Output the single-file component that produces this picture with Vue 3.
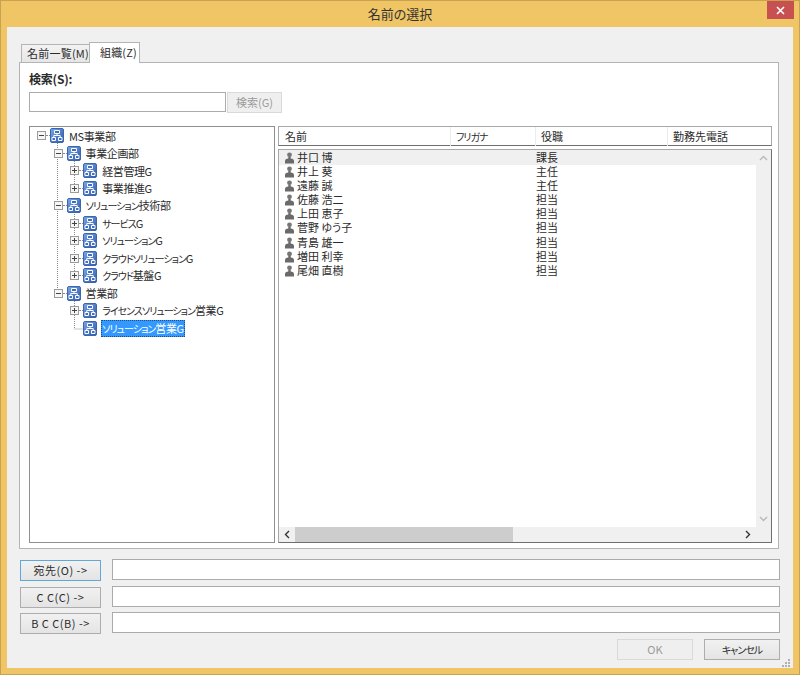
<script setup>
const tree = [
  { name: 'MS事業部', depth: 0, open: true },
  { name: '事業企画部', depth: 1, open: true },
  { name: '経営管理G', depth: 2 },
  { name: '事業推進G', depth: 2 },
  { name: 'ソリューション技術部', depth: 1, open: true },
  { name: 'サービスG', depth: 2 },
  { name: 'ソリューションG', depth: 2 },
  { name: 'クラウドソリューションG', depth: 2 },
  { name: 'クラウド基盤G', depth: 2 },
  { name: '営業部', depth: 1, open: true },
  { name: 'ライセンスソリューション営業G', depth: 2 },
  { name: 'ソリューション営業G', depth: 2, leaf: true, selected: true },
]

const people = [
  ['井口 博', '課長'],
  ['井上 葵', '主任'],
  ['遠藤 誠', '主任'],
  ['佐藤 浩二', '担当'],
  ['上田 恵子', '担当'],
  ['菅野 ゆう子', '担当'],
  ['青島 雄一', '担当'],
  ['増田 利幸', '担当'],
  ['尾畑 直樹', '担当'],
]

const columns = ['名前', 'フリガナ', '役職', '勤務先電話']
const recipients = ['宛先(O) ->', 'C C(C) ->', 'B C C(B) ->']

// katakana is much narrower in the original UI font, so split it out to tighten it
function runs(text) {
  return text.match(/[ァ-ヶー]+|[^ァ-ヶー]+/g).map((t) => ({ t, kana: /[ァ-ヶー]/.test(t) }))
}
</script>

<template>
  <div class="window">
    <div class="titlebar">
      <span class="title">名前の選択</span>
      <button class="close">
        <svg width="9" height="9" viewBox="0 0 9 9"><path d="M1 1l7 7M8 1L1 8" stroke="#fff" stroke-width="1.6" /></svg>
      </button>
    </div>

    <div class="body">
      <div class="tabs">
        <div class="tab">名前一覧(M)</div>
        <div class="tab active">組織(Z)</div>
      </div>

      <div class="panel">
        <label class="search-label">検索(S):</label>
        <div class="search-row">
          <input class="search-input" />
          <button class="search-btn">検索(G)</button>
        </div>

        <div class="split">
          <div class="tree">
            <svg class="guides" width="80" height="220">
              <path d="M27.5 16V167M44.5 34V62M44.5 87V149M44.5 174V202H54" fill="none" stroke="#8a8a8a" stroke-dasharray="1 1" />
            </svg>
            <div
              v-for="node in tree"
              :key="node.name"
              class="node"
              :style="{ paddingLeft: 7 + node.depth * 16.6 + 'px' }"
            >
              <svg class="expander" width="9" height="9" viewBox="0 0 9 9">
                <template v-if="!node.leaf">
                  <rect x=".5" y=".5" width="8" height="8" fill="#f6f6f6" stroke="#9c9c9c" />
                  <path d="M2 4.5h5" stroke="#444" />
                  <path v-if="!node.open" d="M4.5 2v5" stroke="#444" />
                </template>
              </svg>
              <span class="stub" :class="{ blank: node.leaf }"></span>
              <svg class="org" width="14" height="15" viewBox="0 0 14 15">
                <defs>
                  <linearGradient id="orgfill" x1="0" y1="0" x2="1" y2="1">
                    <stop offset="0" stop-color="#7aa6ea" />
                    <stop offset="1" stop-color="#2d58a8" />
                  </linearGradient>
                </defs>
                <rect x=".5" y=".5" width="13" height="14" rx="1.5" fill="url(#orgfill)" stroke="#3a66ae" />
                <path d="M7 5.5v2M3.8 9V7.5h6.4V9" fill="none" stroke="#fff" />
                <path d="M4.5 2.5h5v3h-5zM2 9.5h3.5v3H2zM8.5 9.5H12v3H8.5z" fill="#3f6fc0" stroke="#fff" />
              </svg>
              <span class="node-name" :class="{ selected: node.selected }"><span
                v-for="r in runs(node.name)"
                :key="r.t"
                :class="{ kana: r.kana }"
              >{{ r.t }}</span></span>
            </div>
          </div>

          <div class="right">
            <div class="header">
              <div v-for="col in columns" :key="col" class="col"><span
                v-for="r in runs(col)"
                :key="r.t"
                :class="{ kana: r.kana }"
              >{{ r.t }}</span></div>
            </div>
            <div class="list">
              <div class="rows">
                <div v-for="(p, i) in people" :key="p[0]" class="row" :class="{ current: i === 0 }">
                  <svg class="person" width="11" height="12" viewBox="0 0 11 12">
                    <circle cx="5.5" cy="2.8" r="2.4" fill="#767676" />
                    <path d="M4.3 5h2.4v1.6c2 .3 3.3 1 3.3 2.4v2.5H1V9c0-1.4 1.3-2.1 3.3-2.4z" fill="#6a6a6a" />
                  </svg>
                  <span class="person-name">{{ p[0] }}</span>
                  <span class="person-post">{{ p[1] }}</span>
                </div>
              </div>
              <div class="vscroll">
                <svg width="9" height="6" viewBox="0 0 9 6"><path d="M1 5l3.5-3.5L8 5" fill="none" stroke="#b8b8b8" stroke-width="1.4" /></svg>
                <svg width="9" height="6" viewBox="0 0 9 6"><path d="M1 1l3.5 3.5L8 1" fill="none" stroke="#b8b8b8" stroke-width="1.4" /></svg>
              </div>
              <div class="hscroll">
                <svg class="arrow" width="6" height="9" viewBox="0 0 6 9"><path d="M5 1L1.5 4.5 5 8" fill="none" stroke="#333" stroke-width="1.4" /></svg>
                <div class="track"><div class="thumb"></div></div>
                <svg class="arrow" width="6" height="9" viewBox="0 0 6 9"><path d="M1 1l3.5 3.5L1 8" fill="none" stroke="#333" stroke-width="1.4" /></svg>
              </div>
              <div class="corner"></div>
            </div>
          </div>
        </div>
      </div>

      <div class="recipients">
        <template v-for="(label, i) in recipients" :key="label">
          <button class="btn spaced" :class="{ focused: i === 0 }">{{ label }}</button>
          <input class="address" />
        </template>
      </div>

      <div class="footer">
        <button class="btn wide disabled">OK</button>
        <button class="btn wide"><span class="kana">キャンセル</span></button>
      </div>

      <svg class="grip" width="8" height="8" viewBox="0 0 8 8">
        <path d="M6 0h2v2H6zM3 3h2v2H3zM6 3h2v2H6zM0 6h2v2H0zM3 6h2v2H3zM6 6h2v2H6z" fill="#b0b0b0" />
      </svg>
    </div>
  </div>
</template>

<style scoped>
.window {
  box-sizing: border-box;
  width: 800px;
  height: 675px;
  display: flex;
  flex-direction: column;
  background: #efc566;
  border: 1px solid #c9a24f;
  font-family: "Noto Sans CJK JP", "Noto Sans", sans-serif;
  font-size: 11px;
  font-feature-settings: "palt";
  color: #2b2b2b;
}

.kana {
  font-size: 10px;
  letter-spacing: -1px;
}

.titlebar {
  height: 26px;
  flex: none;
  display: flex;
  align-items: flex-start;
  justify-content: center;
  position: relative;
}

.title {
  font-size: 13px;
  line-height: 25px;
  color: #333;
}

.close {
  position: absolute;
  top: 0;
  right: 5px;
  width: 27px;
  height: 18px;
  padding: 0;
  border: 0;
  background: #c75050;
  display: flex;
  align-items: center;
  justify-content: center;
}

.body {
  flex: 1;
  margin: 0 6px 6px;
  padding: 15px 13px 0 12px;
  background: #f0f0f0;
  display: flex;
  flex-direction: column;
  position: relative;
}

.tabs {
  display: flex;
  align-items: flex-end;
  padding-left: 2px;
  height: 20px;
  position: relative;
}

.tab {
  box-sizing: border-box;
  width: 69px;
  height: 18px;
  line-height: 17px;
  padding-left: 5px;
  text-align: center;
  background: linear-gradient(#f3f3f3, #e6e6e6);
  border: 1px solid #b4b4b4;
  border-bottom: 0;
  letter-spacing: .2px;
  white-space: nowrap;
}

.tab.active {
  width: 51px;
  height: 21px;
  line-height: 18px;
  padding-left: 8px;
  background: #fff;
  margin-left: -1px;
  margin-bottom: -1px;
  position: relative;
  z-index: 1;
}

.panel {
  box-sizing: border-box;
  height: 487px;
  margin-right: 1px;
  background: #fff;
  border: 1px solid #b4b4b4;
  padding: 10px 6px 5px 9px;
  display: flex;
  flex-direction: column;
}

.search-label {
  font-size: 12px;
  font-weight: 700;
  line-height: 12px;
  letter-spacing: -.2px;
}

.search-row {
  display: flex;
  gap: 1px;
  margin-top: 7px;
}

.search-input {
  box-sizing: border-box;
  width: 197px;
  height: 20px;
  border: 1px solid #ababab;
  background: #fff;
}

.search-btn {
  box-sizing: border-box;
  width: 55px;
  height: 21px;
  padding: 0 0 2px;
  border: 1px solid #d9d9d9;
  background: #efefef;
  color: #9a9a9a;
  font: inherit;
  font-feature-settings: "palt";
}

.split {
  flex: 1;
  display: flex;
  gap: 3px;
  margin-top: 13px;
  min-height: 0;
}

.tree {
  box-sizing: border-box;
  width: 246px;
  border: 1px solid #8f8f8f;
  position: relative;
}

.guides {
  position: absolute;
  top: 0;
  left: 0;
}

.node {
  height: 17.5px;
  display: flex;
  align-items: center;
  position: relative;
}

.expander {
  flex: none;
}

.stub {
  flex: none;
  width: 4px;
  height: 0;
  border-top: 1px dotted #8a8a8a;
}

.stub.blank {
  border-top-color: transparent;
}

.org {
  flex: none;
  margin-right: 5px;
}

.node-name {
  line-height: 16px;
  padding: 0 1px;
  white-space: nowrap;
  margin-left: -1px;
  letter-spacing: -.4px;
}

.node-name .kana {
  letter-spacing: -1px;
}

.node-name.selected {
  background: #3399ff;
  color: #fff;
  outline: 1px dotted #1b4f8a;
  outline-offset: -1px;
}

.right {
  flex: 1;
  display: flex;
  flex-direction: column;
  gap: 3px;
  min-width: 0;
}

.header {
  box-sizing: border-box;
  height: 20px;
  flex: none;
  display: grid;
  grid-template-columns: 171px 85px 132px 1fr;
  border: 1px solid #a8a8a8;
  border-bottom-color: #6f6f6f;
  line-height: 18px;
}

.col {
  padding-left: 5px;
  border-left: 1px solid #ececec;
}

.col:first-child {
  border-left: 0;
  padding-left: 6px;
}

.list {
  flex: 1;
  min-height: 0;
  display: grid;
  grid-template-columns: 1fr 15px;
  grid-template-rows: 1fr 15px;
  border: 1px solid #a8a8a8;
  border-bottom-color: #6f6f6f;
  border-right-color: #6f6f6f;
}

.row {
  height: 14.1px;
  display: flex;
  align-items: center;
  padding-left: 5px;
  line-height: 14px;
}

.row.current {
  height: 15px;
  background: #f0f0f0;
}

.person {
  flex: none;
  margin-right: 2px;
}

.person-name {
  width: 239px;
  flex: none;
  margin-bottom: 2px;
}

.person-post {
  margin-bottom: 2px;
}

.vscroll {
  background: #f0f0f0;
  display: flex;
  flex-direction: column;
  justify-content: space-between;
  align-items: center;
  padding: 5px 0;
}

.hscroll {
  grid-column: 1;
  background: #f0f0f0;
  display: flex;
  align-items: center;
}

.arrow {
  flex: none;
  margin: 0 5px;
}

.track {
  flex: 1;
}

.thumb {
  width: 218px;
  height: 15px;
  background: #cdcdcd;
}

.corner {
  background: #f0f0f0;
}

.recipients {
  display: grid;
  grid-template-columns: 81px 668px;
  column-gap: 11px;
  row-gap: 5.5px;
  margin: 11px 0 0 1px;
  align-items: start;
}

.btn {
  box-sizing: border-box;
  height: 21px;
  padding: 0 0 1px;
  border: 1px solid #adadad;
  background: linear-gradient(#f1f1f1, #e4e4e4);
  color: #2b2b2b;
  font: inherit;
  font-feature-settings: "palt";
}

.btn.spaced {
  letter-spacing: .5px;
}

.btn.focused {
  border-color: #5fa8d8;
}

.address {
  box-sizing: border-box;
  height: 21px;
  margin-top: -1px;
  border: 1px solid #ababab;
  background: #fff;
}

.footer {
  display: flex;
  justify-content: flex-end;
  gap: 11px;
  margin-top: 5px;
}

.btn.wide {
  width: 76px;
  padding-bottom: 2px;
}

.btn.disabled {
  background: #efefef;
  border-color: #d9d9d9;
  color: #9a9a9a;
}

.grip {
  position: absolute;
  right: 3px;
  bottom: 1px;
}
</style>

<style>
html, body {
  margin: 0;
  background: #efc566;
}
</style>
